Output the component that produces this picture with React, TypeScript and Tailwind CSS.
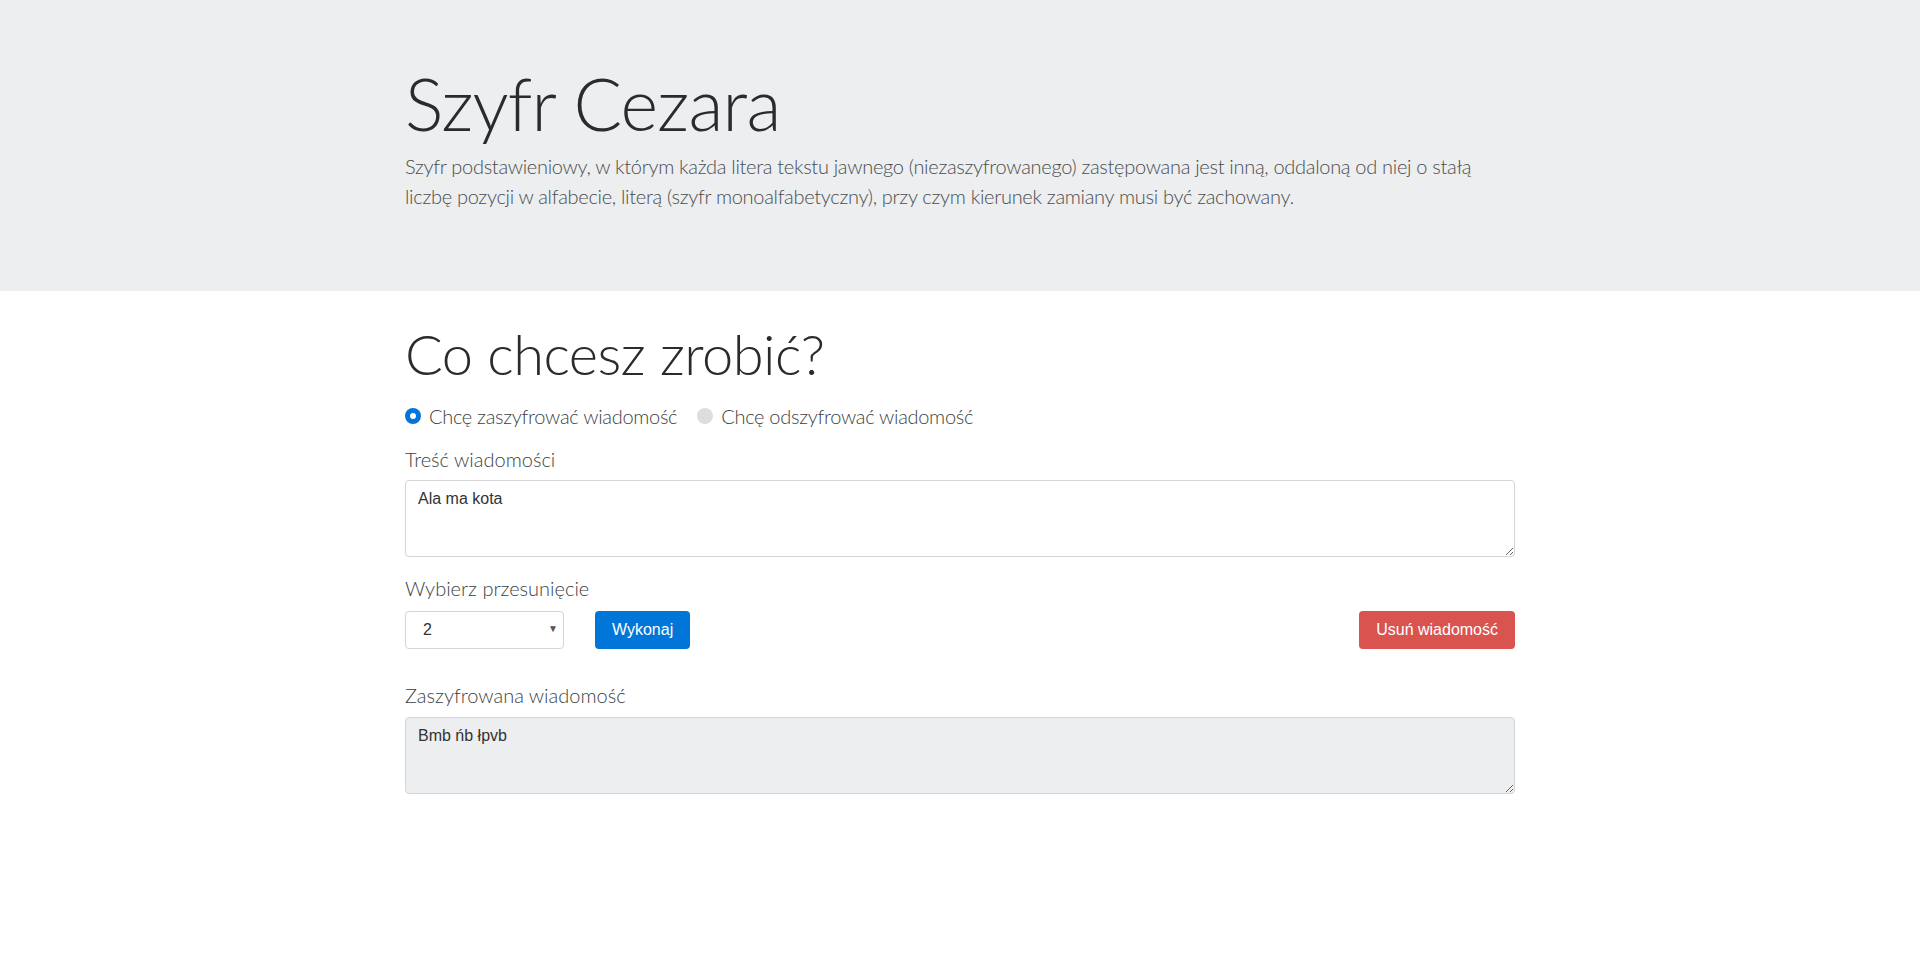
import { useState } from 'react'

const shiftChar = (ch: string, shift: number) => {
    const lower = 'aąbcćdeęfghijklłmnńoóprsśtuwyzźż'
    const upper = lower.toUpperCase()
    let i = lower.indexOf(ch)
    if (i >= 0) return lower[(i + shift + lower.length * 10) % lower.length]
    i = upper.indexOf(ch)
    if (i >= 0) return upper[(i + shift + upper.length * 10) % upper.length]
    return ch
}

export default function App() {
    const [mode, setMode] = useState<'enc' | 'dec'>('enc')
    const [text, setText] = useState('Ala ma kota')
    const [shift, setShift] = useState(2)
    const [result, setResult] = useState('Bmb ńb łpvb')

    const handleRun = () => {
        const s = mode === 'enc' ? shift : -shift
        setResult(text.split('').map((c) => shiftChar(c, s)).join(''))
    }

    return (
        <div className="min-h-screen bg-white text-[#292b2c] font-['Lato','Segoe_UI',sans-serif] font-light">
            {/* Jumbotron */}
            <header className="bg-[#eceeef] mb-8">
                <div className="w-[1110px] mx-auto pt-16 pb-16">
                    <h1 className="text-[72px] leading-[1.1] font-light tracking-[-0.8px] mb-2">Szyfr Cezara</h1>
                    <p className="text-[20px] leading-[1.5] text-[#4a4d50] tracking-[-0.3px] mb-4">
                        Szyfr podstawieniowy, w którym każda litera tekstu jawnego (niezaszyfrowanego) zastępowana jest inną, oddaloną od niej o stałą liczbę pozycji w alfabecie, literą (szyfr monoalfabetyczny), przy czym kierunek zamiany musi być zachowany.
                    </p>
                </div>
            </header>

            <main className="w-[1110px] mx-auto">
                <h2 className="text-[56px] leading-[1.1] font-light tracking-[-0.5px]">Co chcesz zrobić?</h2>

                {/* Mode radios */}
                <div className="flex items-center gap-5 mt-[16px] text-[20px] leading-[30px] text-[#3c3f42] tracking-[-0.3px]">
                    <label className="flex items-center gap-2 cursor-pointer" onClick={() => setMode('enc')}>
                        <span className={mode === 'enc' ? 'w-4 h-4 rounded-full bg-[#0275d8] flex items-center justify-center' : 'w-4 h-4 rounded-full bg-[#dddddd]'}>
                            {mode === 'enc' && <span className="w-1.5 h-1.5 rounded-full bg-white" />}
                        </span>
                        Chcę zaszyfrować wiadomość
                    </label>
                    <label className="flex items-center gap-2 cursor-pointer" onClick={() => setMode('dec')}>
                        <span className={mode === 'dec' ? 'w-4 h-4 rounded-full bg-[#0275d8] flex items-center justify-center' : 'w-4 h-4 rounded-full bg-[#dddddd]'}>
                            {mode === 'dec' && <span className="w-1.5 h-1.5 rounded-full bg-white" />}
                        </span>
                        Chcę odszyfrować wiadomość
                    </label>
                </div>

                {/* Input */}
                <div className="mt-[13px] text-[20px] leading-[30px] text-[#3c3f42]">Treść wiadomości</div>
                <textarea
                    value={text}
                    onChange={(e) => setText(e.target.value)}
                    className="mt-1.5 block w-full h-[77px] border border-[#d5d5d5] rounded px-[12px] py-[6px] font-['Liberation_Sans',Arial,sans-serif] font-normal text-[16px] leading-[24px] text-[#333] outline-none resize-y"
                />

                {/* Shift */}
                <div className="mt-[16px] text-[20px] leading-[30px] text-[#3c3f42]">Wybierz przesunięcie</div>
                <div className="mt-2 flex items-center">
                    <div className="relative w-[159px]">
                        <select
                            value={shift}
                            onChange={(e) => setShift(Number(e.target.value))}
                            className="appearance-none block w-full h-[38px] border border-[#d5d5d5] rounded pl-[17px] pr-6 bg-white font-['Liberation_Sans',Arial,sans-serif] font-normal text-[16px] text-[#333] outline-none"
                        >
                            {Array.from({ length: 25 }, (_, i) => (
                                <option key={i + 1} value={i + 1}>{i + 1}</option>
                            ))}
                        </select>
                        <span className="absolute right-[6px] top-[10px] text-[10px] text-[#555] pointer-events-none font-['DejaVu_Sans',sans-serif]">▼</span>
                    </div>
                    <button
                        onClick={handleRun}
                        className="ml-[31px] h-[38px] px-[17px] rounded bg-[#0275d8] text-white font-['Liberation_Sans',Arial,sans-serif] font-normal text-[16px]"
                    >
                        Wykonaj
                    </button>
                    <button
                        onClick={() => { setText(''); setResult('') }}
                        className="ml-auto h-[38px] px-[17px] rounded bg-[#d9534f] text-white font-['Liberation_Sans',Arial,sans-serif] font-normal text-[16px]"
                    >
                        Usuń wiadomość
                    </button>
                </div>

                {/* Output */}
                <div className="mt-[31px] text-[20px] leading-[30px] text-[#3c3f42]">Zaszyfrowana wiadomość</div>
                <textarea
                    readOnly
                    value={result}
                    className="mt-[7px] block w-full h-[77px] border border-[#d5d5d5] rounded bg-[#eceeef] px-[12px] py-[6px] font-['Liberation_Sans',Arial,sans-serif] font-normal text-[16px] leading-[24px] text-[#333] outline-none resize-y"
                />
            </main>
        </div>
    )
}
